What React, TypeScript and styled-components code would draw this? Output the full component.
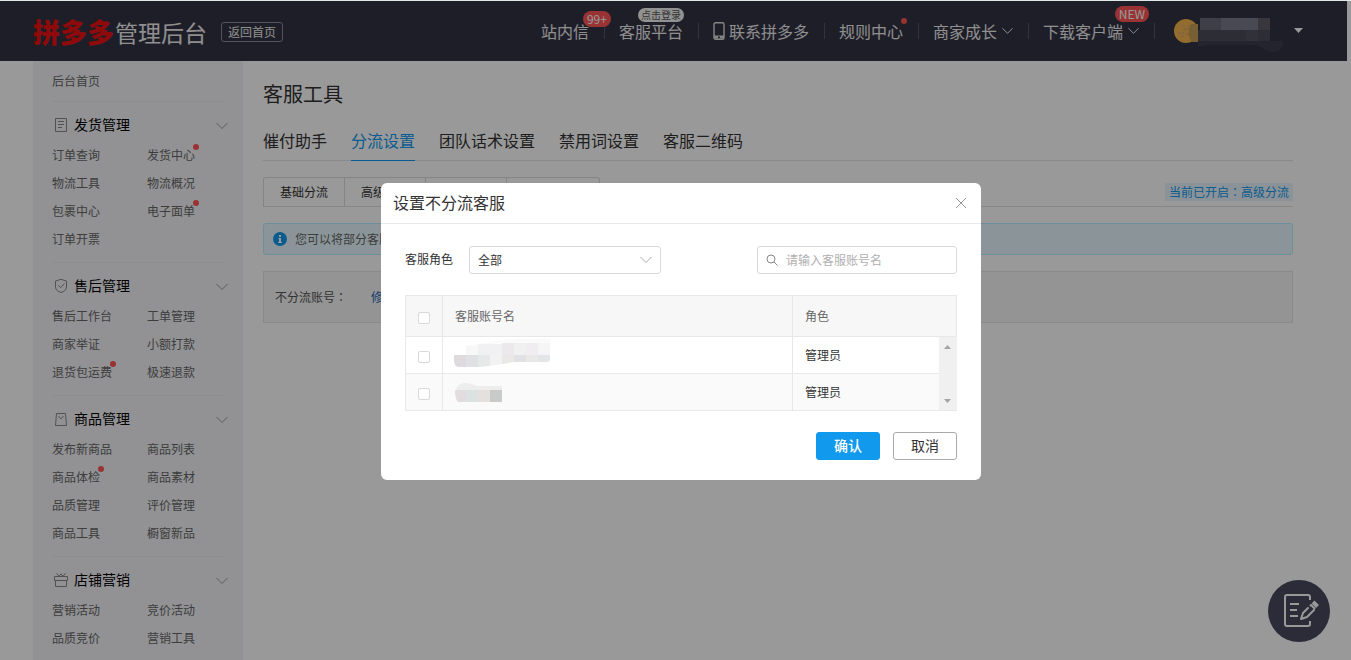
import React from "react";
import styled, { createGlobalStyle, css } from "styled-components";

const GlobalStyle = createGlobalStyle`
  * { box-sizing: border-box; }
  body {
    margin: 0;
    background: #fff;
    color: #333;
    font-family: "Noto Sans CJK SC", "Liberation Sans", sans-serif;
    font-size: 12px;
    line-height: 20px;
  }
  button, input, select { font: inherit; color: inherit; margin: 0; }
  button { padding: 0; border: 0; background: none; cursor: pointer; }
  a { color: inherit; text-decoration: none; }
  h1, h2, ul, p { margin: 0; padding: 0; font-weight: 400; list-style: none; }
  svg { display: block; flex: none; overflow: visible; }
`;

/* ---------- page shell ---------- */

const Page = styled.div`
  display: flex;
  flex-direction: column;
  min-height: 100vh;
  border-top: 1px solid #dfe8e4;
`;

const Header = styled.header`
  display: flex;
  align-items: center;
  height: 60px;
  margin-right: 4px;
  padding: 2px 44px 0 33px;
  background: #333344;
  color: #eee;
`;

const Columns = styled.div`
  display: flex;
  flex: 1;
  padding-left: 33px;
`;

/* ---------- header ---------- */

const Logo = styled.a`
  display: flex;
  align-items: center;
  font-size: 23px;
  line-height: 32px;
  white-space: nowrap;
`;

const LogoMark = styled.span`
  margin-right: 1px;
  color: #ee1111;
  font-size: 27px;
  font-weight: 900;
`;

const BackButton = styled.button`
  height: 20px;
  margin-left: 14px;
  padding: 0 6px;
  border: 1px solid #8a8a94;
  border-radius: 3px;
  line-height: 18px;
  white-space: nowrap;
`;

const TopNav = styled.nav`
  display: flex;
  align-items: center;
  margin-left: auto;
  padding-bottom: 2px;
  font-size: 16px;
  line-height: 24px;
  white-space: nowrap;
`;

const TopItem = styled.div`
  display: flex;
  align-items: center;
  padding: 0 15px 0 14px;

  &::after {
    content: "";
    width: 1px;
    height: 16px;
    margin: 0 -16px 0 15px;
    background: #555566;
  }
  & + & { margin-left: 1px; }
`;

const TopLink = styled.a`
  position: relative;
  display: flex;
  align-items: center;
`;

const PhoneIcon = styled.svg`
  margin-right: 4px;
`;

const Arrow = styled.span`
  margin-left: 5px;
`;

const Badge = styled.span<{ $tone?: "light" }>`
  position: absolute;
  right: -22px;
  bottom: 16px;
  height: 16px;
  padding: 0 4px;
  border-radius: 8px;
  background: #ff5555;
  color: #fff;
  font-size: 12px;
  line-height: 16px;
  ${(p) =>
    p.$tone === "light" &&
    css`
      right: -1px;
      bottom: 21px;
      height: 14px;
      padding: 0 3px;
      background: #f4f4f4;
      color: #555;
      font-size: 10px;
      line-height: 14px;
    `}
`;

const NewBadge = styled(Badge)`
  right: -10px;
  bottom: 21px;
`;

const Dot = styled.span`
  position: absolute;
  top: -1px;
  right: -4px;
  width: 6px;
  height: 6px;
  border-radius: 50%;
  background: #ff5555;
`;

const Account = styled.button`
  display: flex;
  align-items: center;
  margin-left: 20px;
`;

/* ---------- side menu ---------- */

const Sidebar = styled.aside`
  flex: none;
  width: 210px;
  padding: 0 19px;
  background: #f4f4f8;
  color: #666;
`;

const HomeLink = styled.a`
  display: block;
  line-height: 40px;
`;

const Group = styled.section`
  padding: 8px 0 9px;
  border-top: 1px solid #ebebf0;
  &:last-child { padding-bottom: 0; }
`;

const GroupHead = styled.button`
  display: flex;
  align-items: center;
  width: 176px;
  height: 30px;
  margin-bottom: 1px;
  padding-left: 2px;
  color: #000;
  font-size: 14px;

  svg:last-child { margin: 2px 0 0 auto; }
`;

const GroupTitle = styled.span`
  margin-left: 6px;
  padding-bottom: 2px;
`;

const LinkGrid = styled.ul`
  display: grid;
  grid-template-columns: 95px 1fr;
  line-height: 28px;
`;

const MenuLink = styled.a`
  position: relative;
  display: inline-block;

  ${Dot} { top: 3px; }
`;

/* ---------- content ---------- */

const Main = styled.main`
  flex: 1;
  min-width: 0;
  padding: 18px 58px 0 20px;
`;

const Title = styled.h1`
  font-size: 20px;
  line-height: 30px;
`;

const Tabs = styled.nav`
  display: flex;
  gap: 24px;
  height: 40px;
  margin-top: 12px;
  margin-bottom: 16px;
  border-bottom: 1px solid #e6e6e6;
  font-size: 16px;
  line-height: 38px;
`;

const Tab = styled.a<{ $active?: boolean }>`
  height: 40px;
  border-bottom: 1px solid ${(p) => (p.$active ? "#1199ee" : "transparent")};
  color: ${(p) => (p.$active ? "#1199ee" : "#333")};
`;

const SubBar = styled.div`
  display: flex;
  justify-content: space-between;
  align-items: center;
  height: 30px;
  border-bottom: 1px solid #e0e0e0;
`;

const SubTabs = styled.div`
  display: flex;
  height: 30px;
  border: 1px solid #dcdcdc;
  border-bottom: 0;
  border-radius: 3px 3px 0 0;
`;

const SubTab = styled.button<{ $wide?: boolean }>`
  box-sizing: content-box;
  width: ${(p) => (p.$wide ? 92 : 80)}px;
  &:not(:first-child) { border-left: 1px solid #dcdcdc; }
`;

const Status = styled.span`
  padding: 0 4px;
  background: #e9f5fd;
  color: #1199ee;
  line-height: 18px;
`;

/* full-width colon set in the middle of its square */
const Colon = styled.span`
  font-family: "Noto Sans CJK TC", sans-serif;
`;

const Notice = styled.div`
  display: flex;
  align-items: center;
  gap: 8px;
  height: 32px;
  margin-top: 16px;
  padding: 0 9px;
  border: 1px solid #b2f0ff;
  border-radius: 3px;
  background: #e8f9ff;
  color: #666;
`;

const AccountBox = styled.div`
  display: flex;
  align-items: center;
  gap: 24px;
  height: 52px;
  margin-top: 16px;
  padding: 0 11px;
  border: 1px solid #e6e6e6;
  background: #f7f7f7;
  color: #555;
`;

const EditLink = styled.a`
  color: #2266bb;
`;

const NoteButton = styled.button`
  position: fixed;
  right: 21px;
  bottom: 18px;
  display: flex;
  align-items: center;
  justify-content: center;
  width: 62px;
  height: 62px;
  border-radius: 50%;
  background: #4a4a60;
`;

/* ---------- dialog ---------- */

const Overlay = styled.div`
  position: fixed;
  inset: 1px 0 0;
  display: flex;
  justify-content: center;
  align-items: flex-start;
  padding: 182px 0 0 11px;
  background: rgba(0, 0, 0, 0.4);
`;

const Dialog = styled.section`
  width: 600px;
  max-width: 100%;
  border-radius: 6px;
  background: #fff;
`;

const DialogHead = styled.header`
  display: flex;
  align-items: center;
  justify-content: space-between;
  height: 41px;
  padding: 0 15px 0 12px;
  border-bottom: 1px solid #e8e8e8;
`;

const DialogTitle = styled.h2`
  padding-bottom: 2px;
  font-size: 16px;
  line-height: 24px;
`;

const DialogBody = styled.div`
  padding: 22px 24px 20px;
`;

const Filters = styled.div`
  display: flex;
  align-items: center;
  margin-bottom: 21px;
`;

const FieldLabel = styled.label`
  margin-right: 16px;
  padding-bottom: 2px;
`;

const SelectBox = styled.div`
  display: grid;
  align-items: center;
  width: 192px;

  & > * { grid-area: 1 / 1; }
  svg { justify-self: end; margin-right: 9px; pointer-events: none; }
`;

const Select = styled.select`
  appearance: none;
  width: 100%;
  height: 28px;
  padding: 0 28px 0 8px;
  border: 1px solid #d9d9d9;
  border-radius: 3px;
  background: #fff;
`;

const SearchBox = styled.div`
  display: flex;
  align-items: center;
  gap: 8px;
  width: 200px;
  height: 28px;
  margin-left: auto;
  padding: 0 8px;
  border: 1px solid #d9d9d9;
  border-radius: 3px;
`;

const SearchInput = styled.input`
  flex: 1;
  min-width: 0;
  height: 26px;
  padding: 0 0 1px;
  border: 0;
  outline: 0;
  background: none;
  &::placeholder { color: #b0b0b0; opacity: 1; }
`;

const Table = styled.table`
  width: 100%;
  table-layout: fixed;
  border-spacing: 0;
  border-top: 1px solid #e8e8e8;
  border-left: 1px solid #e8e8e8;
`;

const cell = css`
  padding: 0 12px;
  border-right: 1px solid #e8e8e8;
  border-bottom: 1px solid #e8e8e8;
  text-align: left;
  font-weight: 400;
`;

const Th = styled.th`
  ${cell}
  height: 41px;
  background: #f7f7f7;
  color: #666;
`;

const Td = styled.td<{ $last?: boolean }>`
  ${cell}
  height: 37px;
  ${(p) => p.$last && "border-right: 0;"}
`;

const Row = styled.tr`
  &:nth-child(even) td { background: #fafafa; }
`;

const MaskedCell = styled(Td)`
  padding: 0 10px;
`;

const ScrollCell = styled.td`
  height: 74px;
  padding: 0;
  border-bottom: 1px solid #e8e8e8;
  background: #f0f0f0;
`;

const ScrollTrack = styled.div`
  display: flex;
  flex-direction: column;
  justify-content: space-between;
  align-items: center;
  height: 72px;
`;

const ScrollButton = styled.button`
  display: flex;
  align-items: center;
  justify-content: center;
  width: 17px;
  height: 18px;
`;

const Check = styled.input`
  appearance: none;
  display: block;
  width: 12px;
  height: 12px;
  margin: 3px 0 0;
  border: 1px solid #d9d9d9;
  border-radius: 2px;
  background: #fff;
`;

const Actions = styled.footer`
  display: flex;
  justify-content: flex-end;
  gap: 13px;
  margin-top: 21px;
`;

const ActionButton = styled.button<{ $primary?: boolean }>`
  width: 64px;
  height: 28px;
  padding-bottom: 2px;
  border: 1px solid ${(p) => (p.$primary ? "#1199ee" : "#aaa")};
  border-radius: 3px;
  background: ${(p) => (p.$primary ? "#1199ee" : "#fff")};
  color: ${(p) => (p.$primary ? "#fff" : "#333")};
  font-size: 14px;
  font-weight: ${(p) => (p.$primary ? 500 : 400)};
  line-height: 24px;
`;

/* ---------- drawings ---------- */

const Chevron = ({ color = "#999", width = 12 }: { color?: string; width?: number }) => (
  <svg width={width} height="8" viewBox="0 0 12 8" fill="none" stroke={color} aria-hidden="true">
    <path d="M.5 1 6 6.5 11.5 1" />
  </svg>
);

type IconName = "doc" | "shield" | "bag" | "gift";

const iconPaths: Record<IconName, React.ReactNode> = {
  doc: <path d="M2.5 1.5h11v13h-11zM5 4.5h6M5 7.5h6M5 10.5h4" />,
  shield: <path d="M8 1.3 13.5 3v6c0 3-2.500 4.500-5.500 5.500C5 13.500 2.500 12 2.500 9V3zM5.300 7.300l2.300 2.400L11.500 5.500" />,
  bag: <path d="M3.500 2.500h9l1 12h-11zM5.500 5l2.500 3 2.500-3" />,
  gift: <path d="M1.500 4.500h13v4h-13zM2.500 8.500v6h11v-6M3.500 1.300 6 4.300 8 1.800l2 2.500 2.500-3" />,
};

const MenuIcon = ({ name }: { name: IconName }) => (
  <svg width="14" height="16" viewBox="1 0 14 16" fill="none" stroke="#888" aria-hidden="true">
    {iconPaths[name]}
  </svg>
);

const Masked = ({ variant }: { variant: "long" | "short" }) =>
  variant === "long" ? (
    <svg width="100" height="32" viewBox="0 0 100 32" aria-hidden="true">
      <path d="M13 6C32 6 46 0 62 0h36v4H50C36 4 32 8 13 8z" fill="#fafafa" />
      <path d="M13 7h12v9H13z" fill="#f7f7f8" />
      <path d="M25 5h24v11H25z" fill="#f1f1f3" />
      <path d="M49 4h12v12H49z" fill="#ece9ec" />
      <path d="M61 4h12v12H61z" fill="#f0f0f1" />
      <path d="M73 4h12v12H73z" fill="#efedf0" />
      <path d="M85 4h12v12H85z" fill="#f5f5f6" />
      <path d="M1 16h12v12H5q-4-1-4-6z" fill="#dfdade" />
      <path d="M13 16h12v12H13z" fill="#dfe1e4" />
      <path d="M25 16h12v11l-12 1z" fill="#e6e9e8" />
      <path d="M37 16h12v9l-12 2z" fill="#f2f2f2" />
      <path d="M49 16h12v7l-12 2z" fill="#eae8e6" />
      <path d="M61 16h12v7H61z" fill="#dfe1e5" />
      <path d="M73 16h12v7H73z" fill="#e9e8e7" />
      <path d="M85 16h12v5l-2 2H85z" fill="#e3e6e6" />
    </svg>
  ) : (
    <svg width="52" height="24" viewBox="0 0 52 24" aria-hidden="true">
      <path d="M3 11C3 5 8 3 13 3c6 0 9 3 13 3h23v5H3z" fill="#ededed" />
      <path d="M2 10h11v12H5q-3-3-3-12z" fill="#e2dcdf" />
      <path d="M13 10h12v12H13z" fill="#dce1e1" />
      <path d="M25 10h12v12H25z" fill="#e4e0dd" />
      <path d="M37 10h12v12H37z" fill="#c9cbca" />
    </svg>
  );

const AccountMark = () => (
  <svg width="120" height="28" viewBox="0 0 120 28" aria-hidden="true">
    <circle cx="12" cy="14" r="12" fill="#f5b64c" />
    <path d="M8 9h3M9 12h6M13 9h4M4 16h6M12 17h5M6 19h4" stroke="#d9a868" strokeWidth="1.500" />
    <path d="M17 7h7v18h-6q-6-8-1-18z" fill="#c79d55" />
    <path d="M24 24h84q3 9-8 11c-10 0-12-7-20-7H34l-10 2z" fill="#3d3d4e" />
    <path d="M24 13h72v11H24z" fill="#4b4b5a" />
    <path d="M26 1h21v12H26z" fill="#686876" />
    <path d="M47 1h37v12H47z" fill="#787c8a" />
    <path d="M84 1h12v12H84z" fill="#625b67" />
    <path d="M72 13h12v11H72z" fill="#535361" />
  </svg>
);

/* ---------- data ---------- */

type Entry = { text: string; dot?: boolean };
type MenuGroup = { title: string; icon: IconName; links: Entry[] };

const menu: MenuGroup[] = [
  {
    title: "发货管理",
    icon: "doc",
    links: [
      { text: "订单查询" },
      { text: "发货中心", dot: true },
      { text: "物流工具" },
      { text: "物流概况" },
      { text: "包裹中心" },
      { text: "电子面单", dot: true },
      { text: "订单开票" },
    ],
  },
  {
    title: "售后管理",
    icon: "shield",
    links: [
      { text: "售后工作台" },
      { text: "工单管理" },
      { text: "商家举证" },
      { text: "小额打款" },
      { text: "退货包运费", dot: true },
      { text: "极速退款" },
    ],
  },
  {
    title: "商品管理",
    icon: "bag",
    links: [
      { text: "发布新商品" },
      { text: "商品列表" },
      { text: "商品体检", dot: true },
      { text: "商品素材" },
      { text: "品质管理" },
      { text: "评价管理" },
      { text: "商品工具" },
      { text: "橱窗新品" },
    ],
  },
  {
    title: "店铺营销",
    icon: "gift",
    links: [{ text: "营销活动" }, { text: "竞价活动" }, { text: "品质竞价" }, { text: "营销工具" }],
  },
];

const tabs = ["催付助手", "分流设置", "团队话术设置", "禁用词设置", "客服二维码"];

export default function App() {
  return (
    <>
      <GlobalStyle />
      <Page>
        <Header>
          <Logo href="#">
            <LogoMark>拼多多</LogoMark>管理后台
          </Logo>
          <BackButton>返回首页</BackButton>
          <TopNav>
            <TopItem>
              <TopLink href="#">
                站内信<Badge>99+</Badge>
              </TopLink>
            </TopItem>
            <TopItem>
              <TopLink href="#">
                客服平台<Badge $tone="light">点击登录</Badge>
              </TopLink>
            </TopItem>
            <TopItem>
              <TopLink href="#">
                <PhoneIcon width="12" height="18" viewBox="0 0 12 18" aria-hidden="true">
                  <rect x="1" y=".7" width="10" height="16.600" rx="1.500" fill="none" stroke="#ddd" strokeWidth="1.400" />
                  <path d="M1 13.500h10v3H1z" fill="#ddd" />
                  <circle cx="6" cy="15.300" r="1" fill="#333344" />
                </PhoneIcon>
                联系拼多多
              </TopLink>
            </TopItem>
            <TopItem>
              <TopLink href="#">
                规则中心
                <Dot />
              </TopLink>
            </TopItem>
            <TopItem>
              <TopLink href="#">
                商家成长
                <Arrow>
                  <Chevron color="#fff" width={11} />
                </Arrow>
              </TopLink>
            </TopItem>
            <TopItem>
              <TopLink href="#">
                下载客户端
                <Arrow>
                  <Chevron color="#fff" width={11} />
                </Arrow>
                <NewBadge>NEW</NewBadge>
              </TopLink>
            </TopItem>
            <Account aria-label="账号">
              <AccountMark />
              <svg width="9" height="9" viewBox="0 0 9 9" aria-hidden="true">
                <path d="M0 1h9L4.500 6z" fill="#fff" />
              </svg>
            </Account>
          </TopNav>
        </Header>

        <Columns>
          <Sidebar>
            <HomeLink href="#">后台首页</HomeLink>
            {menu.map((group) => (
              <Group key={group.title}>
                <GroupHead>
                  <MenuIcon name={group.icon} />
                  <GroupTitle>{group.title}</GroupTitle>
                  <Chevron />
                </GroupHead>
                <LinkGrid>
                  {group.links.map((link) => (
                    <li key={link.text}>
                      <MenuLink href="#">
                        {link.text}
                        {link.dot && <Dot />}
                      </MenuLink>
                    </li>
                  ))}
                </LinkGrid>
              </Group>
            ))}
          </Sidebar>

          <Main>
            <Title>客服工具</Title>
            <Tabs>
              {tabs.map((tab) => (
                <Tab key={tab} href="#" $active={tab === "分流设置"}>
                  {tab}
                </Tab>
              ))}
            </Tabs>
            <SubBar>
              <SubTabs>
                <SubTab>基础分流</SubTab>
                <SubTab>高级分流</SubTab>
                <SubTab />
                <SubTab $wide />
              </SubTabs>
              <Status>
                当前已开启<Colon>：</Colon>高级分流
              </Status>
            </SubBar>
            <Notice>
              <svg width="14" height="14" viewBox="0 0 14 14" aria-hidden="true">
                <circle cx="7" cy="7" r="7" fill="#1199ee" />
                <path d="M6 3h2v2H6zM5.300 6H8v4h1v1H5v-1h1V7h-.7z" fill="#fff" />
              </svg>
              <p>您可以将部分客服</p>
            </Notice>
            <AccountBox>
              <span>
                不分流账号<Colon>：</Colon>
              </span>
              <EditLink href="#">修改</EditLink>
            </AccountBox>
          </Main>
        </Columns>

        <NoteButton aria-label="反馈">
          <svg width="38" height="36" viewBox="-3 0 38 36" fill="none" stroke="#fff" strokeWidth="2" aria-hidden="true">
            <path d="M27 7V4q0-2-2-2H4Q2 2 2 4v27q0 2 2 2h21q2 0 2-2v-3" />
            <path d="M7 11h9M7 17h7M7 23h8" />
            <path d="M25 15l-5 5-2 6 6-2 7-7" strokeLinejoin="round" strokeLinecap="round" />
            <path d="M27 13l1-1 4 4" strokeLinejoin="round" />
            <path d="M30 9l4.500 4.500" strokeWidth="4" />
          </svg>
        </NoteButton>
      </Page>

      <Overlay>
        <Dialog role="dialog" aria-modal="true" aria-labelledby="dialog-title">
          <DialogHead>
            <DialogTitle id="dialog-title">设置不分流客服</DialogTitle>
            <button aria-label="关闭">
              <svg width="10" height="10" viewBox="0 0 10 10" stroke="#999" aria-hidden="true">
                <path d="M0 0l10 10M10 0 0 10" />
              </svg>
            </button>
          </DialogHead>
          <DialogBody>
            <Filters>
              <FieldLabel htmlFor="role">客服角色</FieldLabel>
              <SelectBox>
                <Select id="role">
                  <option>全部</option>
                </Select>
                <Chevron color="#aaa" />
              </SelectBox>
              <SearchBox>
                <svg width="12" height="12" viewBox="0 0 12 12" fill="none" stroke="#888" aria-hidden="true">
                  <circle cx="5" cy="5" r="4" />
                  <path d="M8 8l3.500 3.500" />
                </svg>
                <SearchInput aria-label="请输入客服账号名" placeholder="请输入客服账号名" />
              </SearchBox>
            </Filters>
            <Table>
              <colgroup>
                <col style={{ width: 37 }} />
                <col />
                <col style={{ width: 146 }} />
                <col style={{ width: 18 }} />
              </colgroup>
              <thead>
                <tr>
                  <Th>
                    <Check type="checkbox" aria-label="全选" />
                  </Th>
                  <Th>客服账号名</Th>
                  <Th colSpan={2}>角色</Th>
                </tr>
              </thead>
              <tbody>
                <Row>
                  <Td>
                    <Check type="checkbox" aria-label="选择第一个账号" />
                  </Td>
                  <MaskedCell>
                    <Masked variant="long" />
                  </MaskedCell>
                  <Td $last>管理员</Td>
                  <ScrollCell rowSpan={2}>
                    <ScrollTrack>
                      <ScrollButton aria-label="向上滚动">
                        <svg width="7" height="4" viewBox="0 0 7 4" aria-hidden="true">
                          <path d="M0 4h7L3.500 0z" fill="#a3a3a3" />
                        </svg>
                      </ScrollButton>
                      <ScrollButton aria-label="向下滚动">
                        <svg width="7" height="4" viewBox="0 0 7 4" aria-hidden="true">
                          <path d="M0 0h7L3.500 4z" fill="#a3a3a3" />
                        </svg>
                      </ScrollButton>
                    </ScrollTrack>
                  </ScrollCell>
                </Row>
                <Row>
                  <Td>
                    <Check type="checkbox" aria-label="选择第二个账号" />
                  </Td>
                  <MaskedCell>
                    <Masked variant="short" />
                  </MaskedCell>
                  <Td $last>管理员</Td>
                </Row>
              </tbody>
            </Table>
            <Actions>
              <ActionButton $primary>确认</ActionButton>
              <ActionButton>取消</ActionButton>
            </Actions>
          </DialogBody>
        </Dialog>
      </Overlay>
    </>
  );
}
